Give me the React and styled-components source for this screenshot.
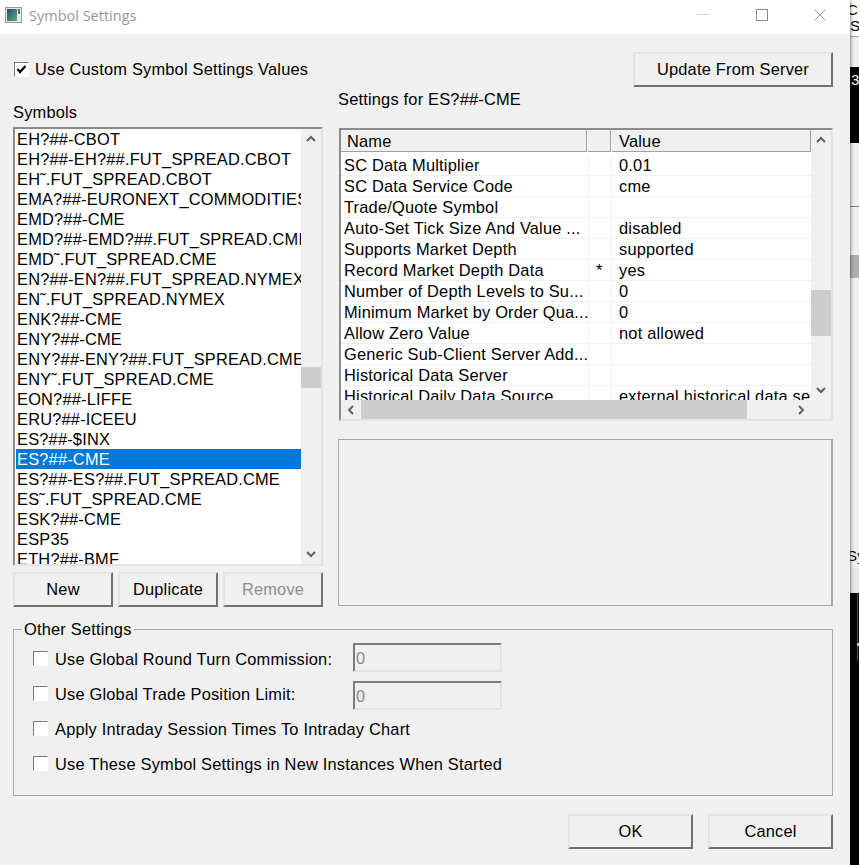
import React from 'react';
import styled, { createGlobalStyle } from 'styled-components';

const GlobalStyle = createGlobalStyle`
    html, body {
        margin: 0;
        padding: 0;
        background: #f0f0f0;
        overflow: hidden;
    }
    * {
        box-sizing: border-box;
    }
`

const Screen = styled.div`
    display: flex;
    width: 859px;
    height: 865px;
    font-family: "Liberation Sans", Arial, sans-serif;
    font-size: 16.4px;
    letter-spacing: 0.2px;
    color: #000;
    overflow: hidden;
`

const Dialog = styled.div`
    position: relative;
    z-index: 1;
    display: flex;
    flex-direction: column;
    width: 850px;
    flex-shrink: 0;
    background: #f0f0f0;
    box-shadow: 0 0 4px rgba(0, 0, 0, 0.7);
`

const TitleBar = styled.div`
    display: flex;
    align-items: center;
    height: 34px;
    flex-shrink: 0;
    padding: 0 0 4px 5px;
    background: #fff;
`

const TitleText = styled.div`
    margin: 1px 0 0 7px;
    font-family: "Open Sans", sans-serif;
    font-size: 14.5px;
    letter-spacing: 0;
    color: #999;
`

const WindowButtons = styled.div`
    display: flex;
    align-items: center;
    gap: 46.5px;
    margin-left: auto;
    padding-right: 24px;
`

const Body = styled.div`
    display: flex;
    flex-direction: column;
    padding: 18px 17px 0 13px;
`

const Columns = styled.div`
    display: flex;
    gap: 15px;
`

const LeftColumn = styled.div`
    display: flex;
    flex-direction: column;
    width: 310px;
`

const RightColumn = styled.div`
    display: flex;
    flex-direction: column;
    width: 495px;
`

const CheckRow = styled.label`
    display: flex;
    align-items: center;
    height: 35px;
    gap: 6px;
    padding-left: ${props => props.$indent || 0}px;
`

const Box = styled.span`
    display: flex;
    align-items: center;
    justify-content: center;
    width: 15px;
    height: 15px;
    flex-shrink: 0;
    background: #fff;
    border: 1px solid;
    border-color: #7a7a7a #fff #fff #7a7a7a;
`

const SymbolsLabel = styled.div`
    height: 20px;
    line-height: 20px;
    margin-top: 15px;
`

const ListBox = styled.div`
    display: flex;
    height: 439px;
    margin-top: 5px;
    border: 2px solid;
    border-color: #8c8c8c #e3e3e3 #e3e3e3 #8c8c8c;
    overflow: hidden;
    background: #fff;
`

const ListRows = styled.div`
    flex: 1;
    min-width: 0;
    padding-left: 1px;
    overflow: hidden;
`

const ListRow = styled.div`
    height: 20px;
    line-height: 20px;
    padding-left: 1px;
    white-space: nowrap;
    overflow: hidden;
    background: ${props => props.$selected ? '#0078d7' : 'transparent'};
    color: ${props => props.$selected ? '#fff' : '#000'};
`

const VScroll = styled.div`
    display: flex;
    flex-direction: column;
    width: ${props => props.$width}px;
    flex-shrink: 0;
    background: #f0f0f0;
`

const VArrow = styled.div`
    display: flex;
    align-items: center;
    justify-content: center;
    height: 20px;
    flex-shrink: 0;
    margin-top: ${props => props.$end ? 'auto' : '0'};
`

const VThumb = styled.div`
    height: ${props => props.$size}px;
    margin-top: ${props => props.$offset}px;
    background: #cdcdcd;
`

const ListButtons = styled.div`
    display: flex;
    gap: 5px;
    margin-top: 6px;
`

const Button = styled.button`
    width: ${props => props.$width}px;
    height: 35px;
    padding: 0;
    font-family: inherit;
    font-size: inherit;
    letter-spacing: inherit;
    color: ${props => props.disabled ? '#8f8f8f' : '#000'};
    background: #f0f0f0;
    border: 2px solid;
    border-color: #e3e3e3 #707070 #707070 #e3e3e3;
`

const TopRight = styled.div`
    display: flex;
    justify-content: flex-end;
`

const SettingsLabel = styled.div`
    height: 20px;
    line-height: 20px;
    margin-top: 2px;
`

const GridPanel = styled.div`
    display: flex;
    flex-direction: column;
    height: 293px;
    margin: 19px 0 0 1px;
    border: 2px solid;
    border-color: #8c8c8c #e3e3e3 #e3e3e3 #8c8c8c;
    background: #f0f0f0;
`

const GridMain = styled.div`
    display: flex;
    height: 270px;
`

const GridRows = styled.div`
    flex: 1;
    min-width: 0;
    background: #fff;
    overflow: hidden;
`

const HeaderRow = styled.div`
    display: flex;
    height: 25px;
    background: #fff;
`

const HeaderCell = styled.div`
    width: ${props => props.$width}px;
    flex-shrink: 0;
    height: 22px;
    line-height: 22px;
    padding-left: ${props => props.$pad}px;
    margin-right: 1px;
    background: #f0f0f0;
    border-bottom: 1px solid #a0a0a0;
    border-right: 1px solid #a0a0a0;
`

const DataRow = styled.div`
    display: flex;
    height: 21px;
    border-bottom: 1px solid #f0f0f0;
`

const DataCell = styled.div`
    width: ${props => props.$width}px;
    flex-shrink: 0;
    line-height: 20px;
    padding-left: ${props => props.$pad}px;
    white-space: nowrap;
    overflow: hidden;
    border-right: ${props => props.$last ? 'none' : '1px solid #f0f0f0'};
`

const HScroll = styled.div`
    display: flex;
    height: 19px;
    width: 470px;
    background: #f0f0f0;
`

const HArrow = styled.div`
    display: flex;
    align-items: center;
    justify-content: center;
    width: 20px;
    flex-shrink: 0;
    margin-left: ${props => props.$end ? 'auto' : '0'};
`

const HThumb = styled.div`
    width: ${props => props.$size}px;
    background: #cdcdcd;
`

const DescriptionBox = styled.div`
    height: 167px;
    margin-top: 18px;
    border: 1px solid #a8a8a8;
    border-right-width: 2px;
`

const Group = styled.fieldset`
    height: 177px;
    margin: 12px 0 0;
    padding: 0;
    width: 820px;
    border: 1px solid #a8a8a8;
`

const GroupTitle = styled.legend`
    height: 20px;
    line-height: 20px;
    margin-left: 8px;
    padding: 0 2px;
`

const GroupRows = styled.div`
    display: flex;
    flex-direction: column;
    padding: 2px 0 0 19px;
`

const OptionRow = styled.div`
    display: flex;
    align-items: flex-start;
    height: 35px;
`

const OptionLabel = styled.label`
    display: flex;
    align-items: center;
    gap: 7px;
    width: 320px;
    height: 35px;
    white-space: nowrap;

    ${Box} {
        margin-bottom: 1px;
    }
`

const OptionText = styled.span`
    padding-top: 2px;
`

const ValueInput = styled.div`
    width: 149px;
    height: 29px;
    margin-top: ${props => props.$offset}px;
    padding-left: 1px;
    line-height: 26px;
    color: #8a8a8a;
    border: 2px solid;
    border-color: #7a7a7a #e3e3e3 #e3e3e3 #7a7a7a;
`

const Footer = styled.div`
    display: flex;
    justify-content: flex-end;
    gap: 15px;
    margin-top: 18px;
    width: 820px;
`

// background window showing to the right of the dialog
const BackWindow = styled.div`
    display: flex;
    flex-direction: column;
    flex: 1;
    min-width: 0;
    background: #f0f0f0;
    overflow: hidden;
`

const BackCaption = styled.div`
    height: 37px;
    padding-top: 2px;
    font-size: 15px;
    line-height: 16px;
    text-indent: -3px;
    background: #fff;
    border-bottom: 1px solid #a0a0a0;
    white-space: nowrap;
`

const BackGap = styled.div`
    height: ${props => props.$height}px;
    background: ${props => props.$color || '#f0f0f0'};
    border-bottom: ${props => props.$line ? '1px solid #808080' : 'none'};
    line-height: ${props => props.$height}px;
    font-size: 15px;
    text-indent: -3px;
    white-space: nowrap;
`

const BackDark = styled.div`
    height: 76px;
    color: #fff;
    font-size: 15px;
    line-height: 26px;
    padding-left: 1px;
    background: #000;
`

const BackChart = styled.div`
    display: flex;
    flex: 1;
    justify-content: flex-end;
    padding-right: 1px;
    background: #000;
`

const RedLine = styled.div`
    display: flex;
    align-items: flex-start;
    width: 1px;
    height: 68px;
    background: #f00;
`

const GreenDot = styled.div`
    width: 2px;
    height: 3px;
    margin-top: 50px;
    flex-shrink: 0;
    background: #b5e48c;
`

const symbols = [
    'EH?##-CBOT',
    'EH?##-EH?##.FUT_SPREAD.CBOT',
    'EH˜.FUT_SPREAD.CBOT',
    'EMA?##-EURONEXT_COMMODITIES',
    'EMD?##-CME',
    'EMD?##-EMD?##.FUT_SPREAD.CME',
    'EMD˜.FUT_SPREAD.CME',
    'EN?##-EN?##.FUT_SPREAD.NYMEX',
    'EN˜.FUT_SPREAD.NYMEX',
    'ENK?##-CME',
    'ENY?##-CME',
    'ENY?##-ENY?##.FUT_SPREAD.CME',
    'ENY˜.FUT_SPREAD.CME',
    'EON?##-LIFFE',
    'ERU?##-ICEEU',
    'ES?##-$INX',
    'ES?##-CME',
    'ES?##-ES?##.FUT_SPREAD.CME',
    'ES˜.FUT_SPREAD.CME',
    'ESK?##-CME',
    'ESP35',
    'ETH?##-BMF',
];

const settings = [
    ['SC Data Multiplier', '', '0.01'],
    ['SC Data Service Code', '', 'cme'],
    ['Trade/Quote Symbol', '', ''],
    ['Auto-Set Tick Size And Value ...', '', 'disabled'],
    ['Supports Market Depth', '', 'supported'],
    ['Record Market Depth Data', '*', 'yes'],
    ['Number of Depth Levels to Su...', '', '0'],
    ['Minimum Market by Order Qua...', '', '0'],
    ['Allow Zero Value', '', 'not allowed'],
    ['Generic Sub-Client Server Add...', '', ''],
    ['Historical Data Server', '', ''],
    ['Historical Daily Data Source', '', 'external historical data service'],
];

const chevrons = {
    up: '1,6 5,2 9,6',
    down: '1,2 5,6 9,2',
    left: '6,1 2,5 6,9',
    right: '2,1 6,5 2,9',
};

const Chevron = ({ dir }) => {
    const flat = dir === 'up' || dir === 'down';
    return <svg width={flat ? 10 : 8} height={flat ? 8 : 10} viewBox={flat ? '0 0 10 8' : '0 0 8 10'}>
        <polyline points={chevrons[dir]} fill="none" stroke="#606060" strokeWidth="2" />
    </svg>
}

const Check = () => <svg width="11" height="11" viewBox="0 0 11 11">
    <polyline points="1.5,5 4,8 9.5,2" fill="none" stroke="#000" strokeWidth="2.2" />
</svg>

const AppIcon = () => <svg width="17" height="16" viewBox="0 0 17 16">
    <defs>
        <linearGradient id="appIconFill" x1="0" y1="0" x2="1" y2="1">
            <stop offset="0" stopColor="#1f4f63" />
            <stop offset="1" stopColor="#5fa98a" />
        </linearGradient>
    </defs>
    <rect x="0.5" y="0.5" width="16" height="15" fill="#e8e8e8" stroke="#9a9a9a" />
    <rect x="2" y="2" width="10" height="12" fill="url(#appIconFill)" />
    <rect x="13" y="2" width="2" height="5" fill="#5a6a70" />
</svg>

const WindowIcon = ({ kind }) => {
    if (kind === 'min') {
        return <svg width="12" height="12" viewBox="0 0 12 12">
            <line x1="0" y1="5.5" x2="12" y2="5.5" stroke="#d0d0d0" />
        </svg>
    }
    if (kind === 'max') {
        return <svg width="12" height="12" viewBox="0 0 12 12">
            <rect x="0.5" y="0.5" width="11" height="11" fill="none" stroke="#8a8a8a" />
        </svg>
    }
    return <svg width="12" height="12" viewBox="0 0 12 12">
        <path d="M0.5 0.5 L11.5 11.5 M11.5 0.5 L0.5 11.5" fill="none" stroke="#999" />
    </svg>
}

const Option = ({ label, value, offset }) => <OptionRow>
    <OptionLabel><Box /><OptionText>{label}</OptionText></OptionLabel>
    {value !== undefined && <ValueInput $offset={offset}>{value}</ValueInput>}
</OptionRow>

const App = () => <Screen>
    <GlobalStyle />
    <Dialog>
        <TitleBar>
            <AppIcon />
            <TitleText>Symbol Settings</TitleText>
            <WindowButtons>
                <WindowIcon kind="min" />
                <WindowIcon kind="max" />
                <WindowIcon kind="close" />
            </WindowButtons>
        </TitleBar>
        <Body>
            <Columns>
                <LeftColumn>
                    <CheckRow $indent={1}><Box><Check /></Box>Use Custom Symbol Settings Values</CheckRow>
                    <SymbolsLabel>Symbols</SymbolsLabel>
                    <ListBox>
                        <ListRows>
                            {symbols.map(s => <ListRow key={s} $selected={s === 'ES?##-CME'}>{s}</ListRow>)}
                        </ListRows>
                        <VScroll $width={20}>
                            <VArrow><Chevron dir="up" /></VArrow>
                            <VThumb $size={21} $offset={218} />
                            <VArrow $end><Chevron dir="down" /></VArrow>
                        </VScroll>
                    </ListBox>
                    <ListButtons>
                        <Button $width={100}>New</Button>
                        <Button $width={100}>Duplicate</Button>
                        <Button $width={100} disabled>Remove</Button>
                    </ListButtons>
                </LeftColumn>
                <RightColumn>
                    <TopRight><Button $width={200}>Update From Server</Button></TopRight>
                    <SettingsLabel>Settings for ES?##-CME</SettingsLabel>
                    <GridPanel>
                        <GridMain>
                            <GridRows>
                                <HeaderRow>
                                    <HeaderCell $width={246} $pad={6}>Name</HeaderCell>
                                    <HeaderCell $width={23} $pad={0} />
                                    <HeaderCell $width={199} $pad={7}>Value</HeaderCell>
                                </HeaderRow>
                                {settings.map(([name, mark, value]) => <DataRow key={name}>
                                    <DataCell $width={248} $pad={3}>{name}</DataCell>
                                    <DataCell $width={23} $pad={7}>{mark}</DataCell>
                                    <DataCell $width={199} $pad={7} $last>{value}</DataCell>
                                </DataRow>)}
                            </GridRows>
                            <VScroll $width={20}>
                                <VArrow><Chevron dir="up" /></VArrow>
                                <VThumb $size={46} $offset={140} />
                                <VArrow $end><Chevron dir="down" /></VArrow>
                            </VScroll>
                        </GridMain>
                        <HScroll>
                            <HArrow><Chevron dir="left" /></HArrow>
                            <HThumb $size={386} />
                            <HArrow $end><Chevron dir="right" /></HArrow>
                        </HScroll>
                    </GridPanel>
                    <DescriptionBox />
                </RightColumn>
            </Columns>
            <Group>
                <GroupTitle>Other Settings</GroupTitle>
                <GroupRows>
                    <Option label="Use Global Round Turn Commission:" value="0" offset={2} />
                    <Option label="Use Global Trade Position Limit:" value="0" offset={5} />
                    <Option label="Apply Intraday Session Times To Intraday Chart" />
                    <Option label="Use These Symbol Settings in New Instances When Started" />
                </GroupRows>
            </Group>
            <Footer>
                <Button $width={125}>OK</Button>
                <Button $width={125}>Cancel</Button>
            </Footer>
        </Body>
    </Dialog>
    <BackWindow>
        <BackCaption>Ch<br />St</BackCaption>
        <BackGap $height={30} />
        <BackDark>3</BackDark>
        <BackGap $height={64} $line />
        <BackGap $height={48} />
        <BackGap $height={23} $color="#b0b0b0" />
        <BackGap $height={266} />
        <BackGap $height={24}>Sy</BackGap>
        <BackGap $height={25} $color="#e8e8e8" />
        <BackChart>
            <RedLine><GreenDot /></RedLine>
        </BackChart>
    </BackWindow>
</Screen>

export default App;
